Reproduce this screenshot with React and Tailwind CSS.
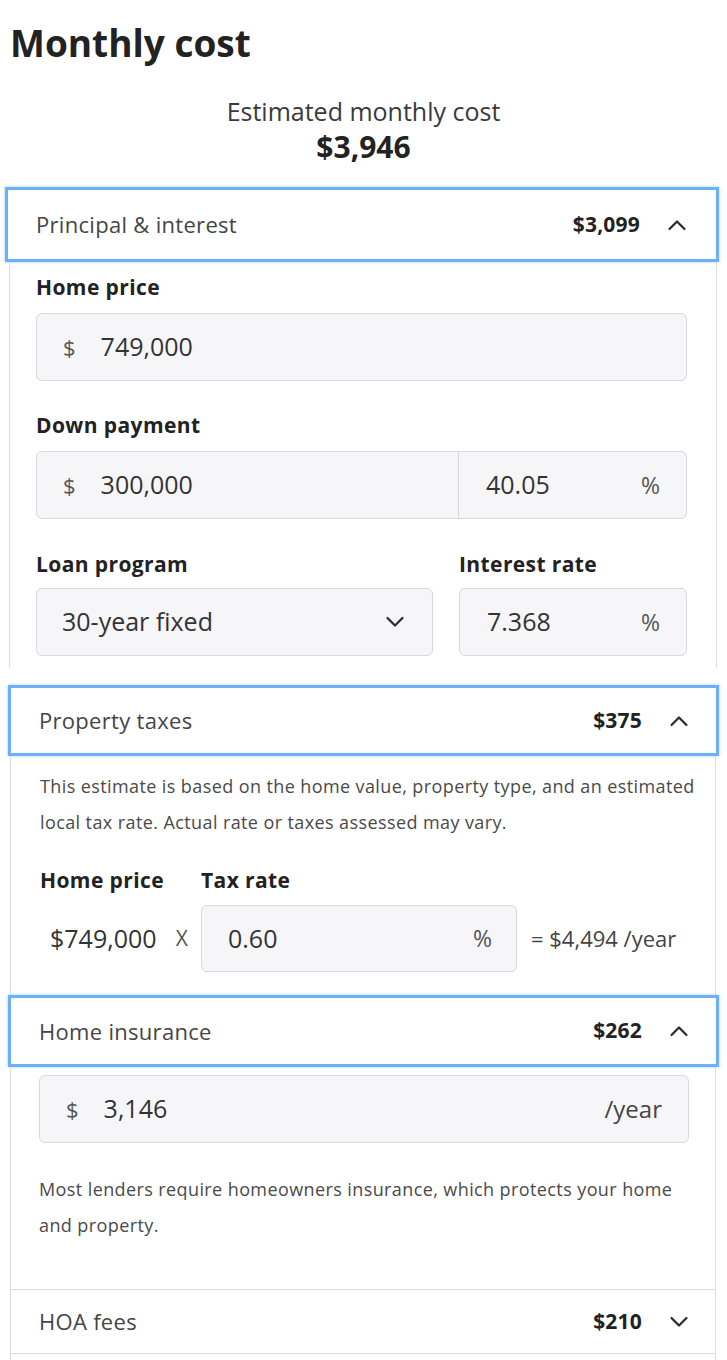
const font = { fontFamily: '"Open Sans", "Noto Sans", sans-serif' };

function Chevron({ up = true, className = '' }) {
  return (
    <svg width="20" height="12" viewBox="0 0 20 12" className={className} fill="none">
      <path
        d={up ? 'M2.5 10 L10 2.5 L17.5 10' : 'M2.5 2 L10 9.5 L17.5 2'}
        stroke="#2a2a2a"
        strokeWidth="2.2"
        strokeLinecap="round"
        strokeLinejoin="round"
      />
    </svg>
  );
}

function Header({ title, amount, className }) {
  return (
    <div className={`flex items-center border-[3px] border-[#6cb0f7] shadow-[0_0_3px_rgba(108,176,247,0.6)] pl-[28px] ${className}`}>
      <span className="text-[22px] tracking-[0.3px] text-[#454545]">{title}</span>
      <span className="ml-auto text-[21px] tracking-[0.2px] font-bold text-[#222]">{amount}</span>
      <Chevron className="ml-[27px]" />
    </div>
  );
}

const inputBox = 'rounded-[6px] border border-[#d8d8de] bg-[#f6f6f9]';
const label = 'text-[21px] leading-[28px] tracking-[0.4px] font-bold text-[#222]';
const para = 'text-[18px] leading-[36px] tracking-[0.4px] text-[#4a4a4a] whitespace-nowrap';

export default function App() {
  return (
    <div className="w-[727px] h-[1360px] overflow-hidden bg-white text-[#333]" style={font}>
      <h1 className="pt-[21px] pl-[10px] text-[37px] leading-[44px] font-bold text-[#222]">Monthly cost</h1>

      <div className="mt-[30px] text-center">
        <div className="text-[25px] leading-[32px] text-[#3a3a3a]">Estimated monthly cost</div>
        <div className="mt-[2px] text-[30px] leading-[36px] font-bold text-[#222]">$3,946</div>
      </div>

      {/* Principal & interest */}
      <Header title="Principal & interest" amount="$3,099" className="mt-[22px] ml-[5px] w-[714px] h-[75px] pr-[29px]" />
      <div className="ml-[9px] w-[708px] border-x border-[#dcdcdc] pl-[26px] pr-[29px] pt-[11px] pb-[12px]">
        <div className={label}>Home price</div>
        <div className={`mt-[12px] h-[68px] flex items-center pl-[26px] ${inputBox}`}>
          <span className="text-[22px] text-[#555]">$</span>
          <span className="ml-[25px] text-[25px] text-[#333]">749,000</span>
        </div>

        <div className={`mt-[30px] ${label}`}>Down payment</div>
        <div className={`mt-[12px] h-[68px] flex ${inputBox}`}>
          <div className="flex-1 flex items-center pl-[26px]">
            <span className="text-[22px] text-[#555]">$</span>
            <span className="ml-[25px] text-[25px] text-[#333]">300,000</span>
          </div>
          <div className="w-[228px] flex items-center border-l border-[#d8d8de] pl-[27px] pr-[26px]">
            <span className="text-[25px] text-[#333]">40.05</span>
            <span className="ml-auto text-[23px] text-[#555]">%</span>
          </div>
        </div>

        <div className="mt-[31px] flex gap-[26px]">
          <div className="flex-1">
            <div className={label}>Loan program</div>
            <div className={`mt-[10px] h-[68px] flex items-center pl-[25px] pr-[27px] ${inputBox}`}>
              <span className="text-[25px] text-[#333]">30-year fixed</span>
              <Chevron up={false} className="ml-auto" />
            </div>
          </div>
          <div className="w-[228px]">
            <div className={label}>Interest rate</div>
            <div className={`mt-[10px] h-[68px] flex items-center pl-[27px] pr-[26px] ${inputBox}`}>
              <span className="text-[25px] text-[#333]">7.368</span>
              <span className="ml-auto text-[23px] text-[#555]">%</span>
            </div>
          </div>
        </div>
      </div>

      {/* Property taxes */}
      <Header title="Property taxes" amount="$375" className="mt-[17px] ml-[8px] w-[711px] h-[71px] pr-[27px]" />
      <div className="ml-[10px] w-[706px] border-x border-[#dcdcdc] pl-[29px] pr-[26px] pt-[12px] pb-[23px]">
        <p className={para}>
          This estimate is based on the home value, property type, and an estimated
          <br />
          local tax rate. Actual rate or taxes assessed may vary.
        </p>
        <div className={`mt-[26px] flex ${label}`}>
          <div className="w-[161px]">Home price</div>
          <div>Tax rate</div>
        </div>
        <div className="mt-[11px] flex items-center">
          <div className="w-[161px] flex items-center pl-[10px] pr-[13px]">
            <span className="text-[25px] text-[#333]">$749,000</span>
            <span className="ml-auto text-[21px] text-[#555]">X</span>
          </div>
          <div className={`w-[316px] h-[67px] flex items-center pl-[26px] pr-[24px] ${inputBox}`}>
            <span className="text-[25px] text-[#333]">0.60</span>
            <span className="ml-auto text-[23px] text-[#555]">%</span>
          </div>
          <span className="ml-[14px] text-[22px] text-[#444]">= $4,494 /year</span>
        </div>
      </div>

      {/* Home insurance */}
      <Header title="Home insurance" amount="$262" className="ml-[8px] w-[711px] h-[72px] pr-[27px]" />
      <div className="ml-[10px] w-[706px] border-x border-[#dcdcdc]">
        <div className="pl-[28px] pr-[26px] pt-[8px] pb-[46px]">
          <div className={`h-[68px] flex items-center pl-[26px] pr-[26px] ${inputBox}`}>
            <span className="text-[22px] text-[#555]">$</span>
            <span className="ml-[25px] text-[25px] text-[#333]">3,146</span>
            <span className="ml-auto text-[24px] text-[#444]">/year</span>
          </div>
          <p className={`mt-[28px] ${para}`}>
            Most lenders require homeowners insurance, which protects your home
            <br />
            and property.
          </p>
        </div>
        <div className="h-[65px] flex items-center border-y border-[#dcdcdc] pl-[28px] pr-[26px]">
          <span className="text-[22px] tracking-[0.3px] text-[#454545]">HOA fees</span>
          <span className="ml-auto text-[21px] tracking-[0.2px] font-bold text-[#222]">$210</span>
          <Chevron up={false} className="ml-[27px]" />
        </div>
        <div className="h-[20px]" />
      </div>
    </div>
  );
}
